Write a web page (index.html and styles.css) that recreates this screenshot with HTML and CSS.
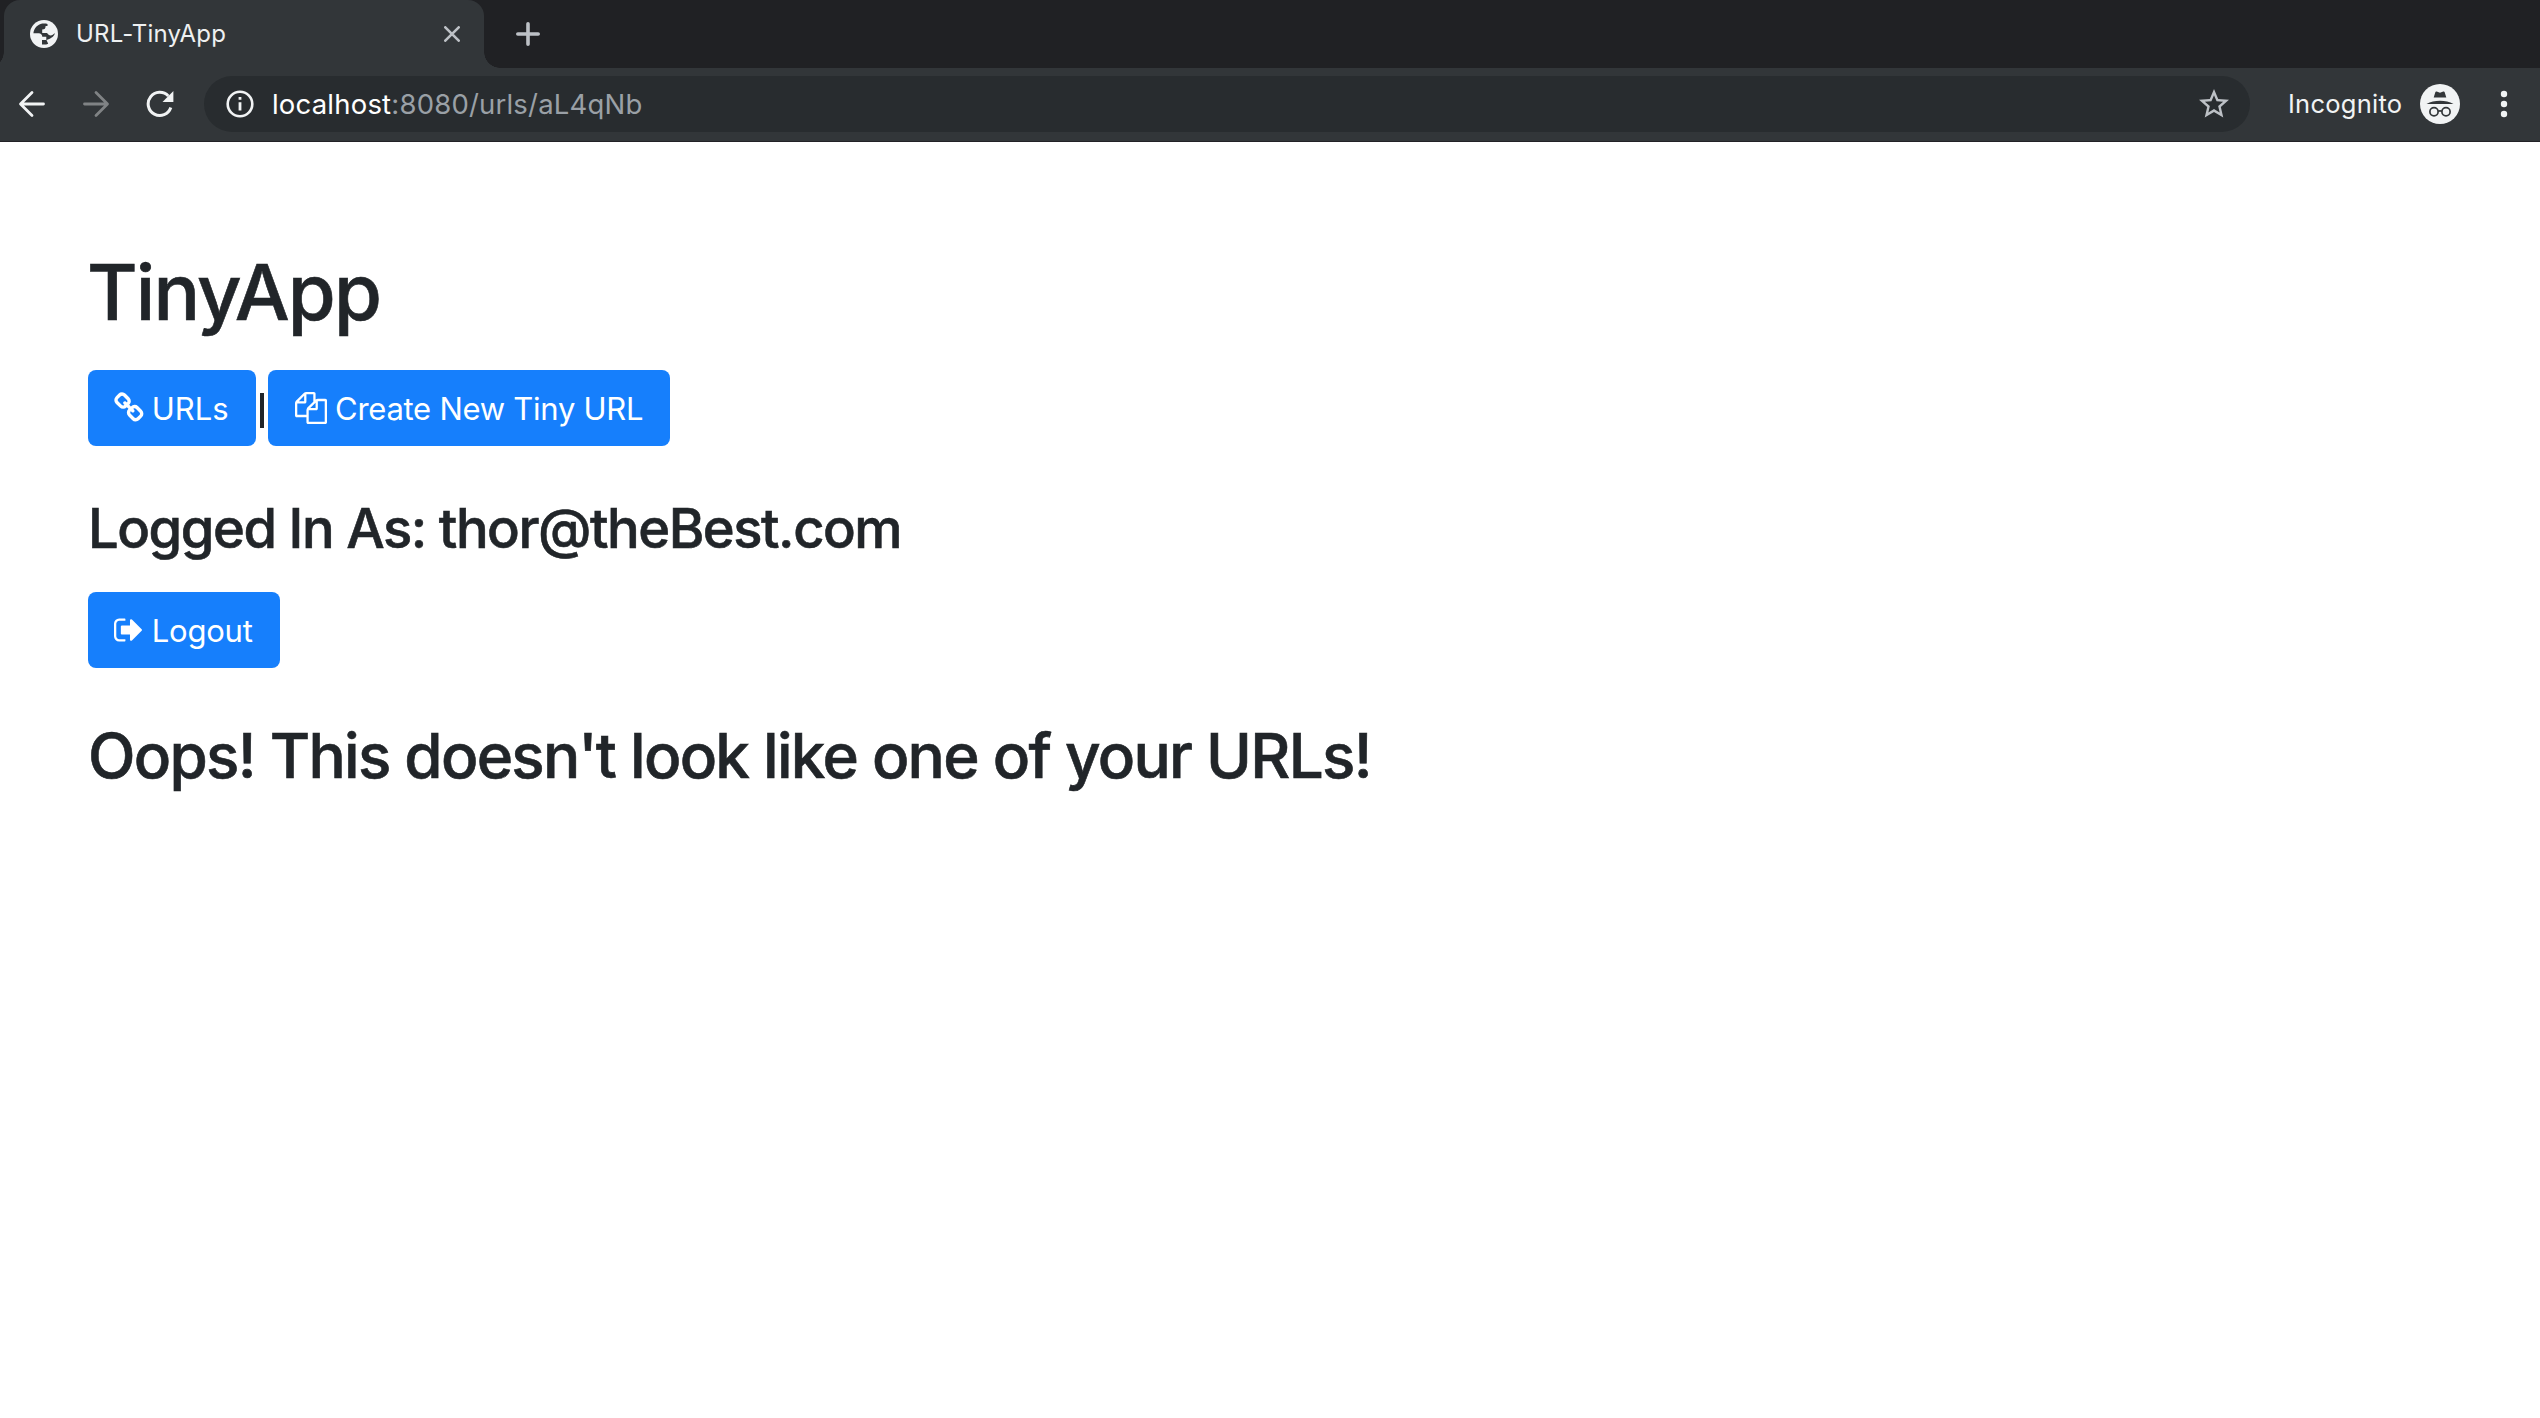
FILE: index.html
```html
<!DOCTYPE html>
<html lang="en">
<head>
<meta charset="utf-8">
<title>URL-TinyApp</title>
<link rel="stylesheet" href="styles.css">
</head>
<body>
<header class="browser">
  <div class="tabstrip">
    <div class="tab">
      <svg class="globe" viewBox="0 0 28 28"><circle cx="14" cy="14" r="14" fill="#f1f3f4"/><path d="M12.300 3.600C7.500 4.500 3.900 8.300 3.400 13.300H8.900C10.600 13.300 12.300 14.500 12.300 16.700H16.300V20H12V24.400C14 24.700 16.300 24.600 18.200 23.700L16.500 20.100C20.500 18.500 22.600 17.600 24.600 14.200L24.500 13C22.800 16.100 18.700 16.300 17.100 13.100H12.200V9.600C14.700 9.600 15.600 8.600 15.600 6.100H17.500V3.900C15.800 3.400 14 3.300 12.300 3.600Z" fill="#323639"/></svg>
      <span class="tab-title">URL-TinyApp</span>
      <svg class="close" viewBox="0 0 16 16"><path d="M1.300 1.300 14.700 14.700M14.700 1.300 1.300 14.700"/></svg>
    </div>
    <svg class="plus" viewBox="0 0 24 24"><path d="M12 1.800V22.200M1.800 12H22.200"/></svg>
  </div>
  <div class="toolbar">
    <svg class="nav back" viewBox="0 0 28 28"><path d="M25.500 14H3M14 2.500 2.500 14 14 25.500"/></svg>
    <svg class="nav forward" viewBox="0 0 28 28"><path d="M2.500 14H25M14 2.500 25.500 14 14 25.500"/></svg>
    <svg class="reload" viewBox="0 0 28 28"><path d="M24.800 17.500A11.600 11.600 0 1 1 22.300 6" fill="none" stroke="#f1f3f4" stroke-width="3"/><path d="M27.400 1V12H16.500Z" fill="#f1f3f4"/></svg>
    <div class="omnibox">
      <svg class="info" viewBox="0 0 28 28"><circle cx="14" cy="14" r="12.300" fill="none" stroke="#f1f3f4" stroke-width="2.600"/><path d="M12.600 7H15.400V9.800H12.600ZM12.600 12.200H15.400V20.600H12.600Z" fill="#f1f3f4"/></svg>
      <span class="url"><span class="host">localhost</span>:8080/urls/aL4qNb</span>
      <svg class="star" viewBox="0 0 24 24"><path d="M22 9.240l-7.190-.62L12 2 9.190 8.630 2 9.240l5.460 4.730L5.820 21 12 17.270 18.180 21l-1.630-7.030L22 9.240zM12 15.400l-3.760 2.270 1-4.280-3.320-2.880 4.380-.38L12 6.100l1.710 4.040 4.380.38-3.320 2.880 1 4.280L12 15.400z"/></svg>
    </div>
    <span class="incognito">Incognito</span>
    <svg class="spy" viewBox="0 0 40 40"><circle cx="20" cy="20" r="20" fill="#f1f3f4"/><g fill="#323639"><path d="M13.700 13.400 15.400 8.100C15.600 7.500 16.200 7.400 16.700 7.600L20 8.800 23.300 7.600C23.800 7.400 24.400 7.500 24.600 8.100L26.300 13.400ZM6.500 19.900Q12.500 16.800 20 16.800T33.500 19.900Z"/></g><g fill="none" stroke="#323639" stroke-width="1.700"><circle cx="14" cy="27.700" r="4.100"/><circle cx="26" cy="27.700" r="4.100"/><path d="M18 27.300Q20 26.300 22 27.300"/></g></svg>
    <svg class="menu" viewBox="0 0 8 28"><circle cx="4" cy="4" r="3.200"/><circle cx="4" cy="14" r="3.200"/><circle cx="4" cy="24" r="3.200"/></svg>
  </div>
</header>
<main class="page">
  <h1>TinyApp</h1>
  <nav class="actions">
    <a class="btn btn-urls"><svg class="icon-link" viewBox="64 0 1664 1792"><path d="M1520 1216q0-40-28-68l-208-208q-28-28-68-28-42 0-72 32 3 3 19 18.500t21.500 21.500 15 19 13 25.500 3.500 27.500q0 40-28 68t-68 28q-15 0-27.500-3.500t-25.500-13-19-15-21.500-21.500-18.500-19q-33 31-33 73 0 40 28 68l206 207q27 27 68 27 40 0 68-26l147-146q28-28 28-67zm-703-705q0-40-28-68l-206-207q-28-28-68-28-39 0-68 27l-147 146q-28 28-28 67 0 40 28 68l208 208q27 27 68 27 42 0 72-31-3-3-19-18.500t-21.500-21.500-15-19-13-25.500-3.500-27.500q0-40 28-68t68-28q15 0 27.500 3.500t25.500 13 19 15 21.500 21.500 18.500 19q33-31 33-73zm895 705q0 120-85 203l-147 146q-83 83-203 83-121 0-204-85l-206-207q-83-83-83-203 0-123 88-209l-88-88q-86 88-208 88-120 0-204-84l-208-208q-84-84-84-204t85-203l147-146q83-83 203-83 121 0 204 85l206 207q83 83 83 203 0 123-88 209l88 88q86-88 208-88 120 0 204 84l208 208q84 84 84 204z"/></svg><span>URLs</span></a>
    <span class="divider"></span>
    <a class="btn btn-create"><svg class="icon-copy" viewBox="0 0 1792 1792"><path d="M1696 384q40 0 68 28t28 68v1216q0 40-28 68t-68 28h-960q-40 0-68-28t-28-68v-288h-544q-40 0-68-28t-28-68v-672q0-40 20-88t48-76l408-408q28-28 76-48t88-20h416q40 0 68 28t28 68v328q68-40 128-40h416zm-544 213l-299 299h299v-299zm-640-384l-299 299h299v-299zm196 647l316-316v-416h-384v416q0 40-28 68t-68 28h-416v640h512v-256q0-40 20-88t48-76zm956 804v-1152h-384v416q0 40-28 68t-68 28h-416v640h896z"/></svg><span>Create New Tiny URL</span></a>
  </nav>
  <h3>Logged In As: thor@theBest.com</h3>
  <div class="actions">
    <a class="btn btn-logout"><svg class="icon-link" viewBox="64 0 1664 1792"><path d="M704 1440q0 4 1 20t.5 26.500-3 23.500-10 19.500-20.500 6.500h-320q-119 0-203.500-84.500t-84.500-203.500v-704q0-119 84.500-203.500t203.500-84.500h320q13 0 22.500 9.500t9.500 22.500q0 4 1 20t.5 26.500-3 23.500-10 19.500-20.500 6.500h-320q-66 0-113 47t-47 113v704q0 66 47 113t113 47h312l11.500 1 11.500 3 8 5.500 7 9 2 13.500zm928-544q0 26-19 45l-544 544q-19 19-45 19t-45-19-19-45v-288h-448q-26 0-45-19t-19-45v-384q0-26 19-45t45-19h448v-288q0-26 19-45t45-19 45 19l544 544q19 19 19 45z"/></svg><span>Logout</span></a>
  </div>
  <h2>Oops! This doesn't look like one of your URLs!</h2>
</main>
</body>
</html>
```
FILE: styles.css
```css
* { box-sizing: border-box; }
body {
  margin: 0;
  background: #fff;
  color: #212529;
  font-family: Inter, "Liberation Sans", sans-serif;
}
svg { display: block; flex: none; }
span, h1, h2, h3 { white-space: nowrap; }

.browser { border-bottom: 1px solid #222126; }
.tabstrip {
  display: flex;
  align-items: center;
  height: 68px;
  background: #202124;
  padding-left: 4px;
}
.tab {
  position: relative;
  display: flex;
  align-items: center;
  width: 480px;
  height: 68px;
  padding: 0 24px 0 26px;
  background: #323639;
  border-radius: 16px 16px 0 0;
}
.tab::before,
.tab::after {
  content: "";
  position: absolute;
  bottom: 0;
  width: 16px;
  height: 16px;
}
.tab::before { left: -16px; background: radial-gradient(circle at 0 0, transparent 15.500px, #323639 16px); }
.tab::after { right: -16px; background: radial-gradient(circle at 100% 0, transparent 15.500px, #323639 16px); }
.globe { width: 28px; height: 28px; }
.tab-title { margin-left: 18px; padding-bottom: 1px; font-size: 24px; letter-spacing: 0.200px; color: #eef0f1; }
.close { width: 16px; height: 16px; margin-left: auto; fill: none; stroke: #bdc1c6; stroke-width: 2.600; stroke-linecap: round; }
.plus { width: 24px; height: 24px; margin-left: 32px; fill: none; stroke: #bdc1c6; stroke-width: 3.600; stroke-linecap: round; }

.toolbar {
  display: flex;
  align-items: center;
  height: 73px;
  padding: 0 32px 1px 18px;
  background: #323639;
}
.nav { width: 28px; height: 28px; fill: none; stroke: #f1f3f4; stroke-width: 2.800; stroke-linecap: round; stroke-linejoin: round; }
.forward { margin-left: 36px; stroke: #808385; }
.reload { width: 28px; height: 28px; margin-left: 36px; }
.omnibox {
  display: flex;
  align-items: center;
  width: 2046px;
  height: 56px;
  margin-left: 30px;
  padding: 0 18px 0 22px;
  border-radius: 28px;
  background: #282c2f;
}
.info { width: 28px; height: 28px; }
.url { margin-left: 18px; padding-bottom: 1px; font-size: 27.500px; letter-spacing: 0.200px; color: #9aa0a6; }
.host { color: #fff; }
.star { width: 36px; height: 36px; margin-left: auto; fill: #bdc1c6; }
.incognito { width: 131px; margin-left: 38px; padding-bottom: 1px; font-size: 25.500px; letter-spacing: 0.250px; color: #f1f3f4; }
.spy { width: 40px; height: 40px; margin-left: 1px; }
.menu { width: 8px; height: 28px; margin-left: auto; fill: #f1f3f4; }

.page { padding: 102px 88px 0; }
h1, h2, h3 { margin: 0; font-weight: 500; -webkit-text-stroke: 0.600px #212529; }
h1 { font-size: 77.600px; line-height: 96px; letter-spacing: -1.850px; margin: 0 0 30px -1px; }
h3 { font-size: 54.300px; line-height: 67px; letter-spacing: -1.450px; margin: 49px 0 30px; }
h2 { font-size: 62px; line-height: 77px; letter-spacing: -1.730px; margin-top: 49px; }
.actions { display: flex; }
.btn {
  display: flex;
  align-items: center;
  height: 76px;
  padding-left: 26px;
  border-radius: 8px;
  background: #167ffc;
  color: #fff;
  font-size: 31px;
  line-height: 48px;
}
.btn svg { fill: #fff; }
.btn span { margin-left: 8px; padding-top: 1px; }
.btn-urls { width: 168px; }
.btn-create { width: 402px; padding-left: 27px; letter-spacing: -0.260px; }
.btn-logout { width: 192px; letter-spacing: -0.200px; }
.icon-link { width: 29.700px; height: 32px; }
.icon-copy { width: 32px; height: 32px; }
.divider { width: 4px; height: 35px; margin: 23px 4px 0; background: #212529; }
```
